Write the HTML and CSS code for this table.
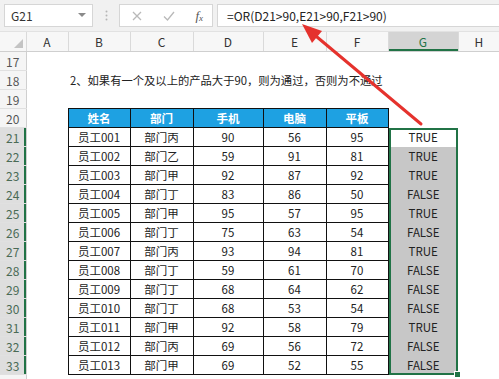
FILE: index.html
```html
<!DOCTYPE html>
<html>
<head>
<meta charset="utf-8">
<link rel="stylesheet" href="styles.css">
</head>
<body>
<div class="app">
  <div class="fbar">
    <div class="namebox">
      <span>G21</span>
      <svg class="dd" width="8" height="5" viewBox="0 0 8 5"><path d="M0 0 L8 0 L4 4 Z" fill="#8a8a8a"/></svg>
    </div>
    <div class="grip">
      <svg width="3" height="11" viewBox="0 0 3 11"><circle cx="1.5" cy="1.5" r="1" fill="#b5b5b5"/><circle cx="1.5" cy="5.5" r="1" fill="#b5b5b5"/><circle cx="1.5" cy="9.5" r="1" fill="#b5b5b5"/></svg>
    </div>
    <div class="btns">
      <svg width="10" height="10" viewBox="0 0 10 10"><path d="M1 1 L9 9 M9 1 L1 9" stroke="#b9b9b9" stroke-width="1.3" fill="none"/></svg>
      <svg width="12" height="10" viewBox="0 0 12 10"><path d="M1 5.5 L4.5 9 L11 1" stroke="#b9b9b9" stroke-width="1.3" fill="none"/></svg>
      <span class="fx">f<sub>x</sub></span>
    </div>
    <div class="formula">=OR(D21&gt;90,E21&gt;90,F21&gt;90)</div>
  </div>

  <table class="sheet">
    <colgroup>
      <col class="c-rh"><col class="c-a"><col class="c-b"><col class="c-c"><col class="c-d"><col class="c-e"><col class="c-f"><col class="c-g"><col class="c-h">
    </colgroup>
    <tr class="hdr">
      <td class="corner"><svg width="9" height="9" viewBox="0 0 9 9"><path d="M9 0 L9 9 L0 9 Z" fill="#c4c4c4"/></svg></td>
      <td class="ch">A</td><td class="ch">B</td><td class="ch">C</td><td class="ch">D</td><td class="ch">E</td><td class="ch">F</td><td class="ch chsel">G</td><td class="ch">H</td>
    </tr>
    <tr><td class="rh">17</td><td></td><td></td><td></td><td></td><td></td><td></td><td></td><td></td></tr>
    <tr><td class="rh">18</td><td></td><td class="note" colspan="7">2、如果有一个及以上的产品大于90，则为通过，否则为不通过</td></tr>
    <tr><td class="rh">19</td><td></td><td></td><td></td><td></td><td></td><td></td><td></td><td></td></tr>
    <tr><td class="rh">20</td><td></td><td class="th">姓名</td><td class="th">部门</td><td class="th">手机</td><td class="th">电脑</td><td class="th">平板</td><td></td><td></td></tr>
    <tr><td class="rh sel">21</td><td></td><td class="t">员工001</td><td class="t">部门丙</td><td class="t">90</td><td class="t">56</td><td class="t">95</td><td class="g active">TRUE</td><td></td></tr>
    <tr><td class="rh sel">22</td><td></td><td class="t">员工002</td><td class="t">部门乙</td><td class="t">59</td><td class="t">91</td><td class="t">81</td><td class="g">TRUE</td><td></td></tr>
    <tr><td class="rh sel">23</td><td></td><td class="t">员工003</td><td class="t">部门甲</td><td class="t">92</td><td class="t">87</td><td class="t">92</td><td class="g">TRUE</td><td></td></tr>
    <tr><td class="rh sel">24</td><td></td><td class="t">员工004</td><td class="t">部门丁</td><td class="t">83</td><td class="t">86</td><td class="t">50</td><td class="g">FALSE</td><td></td></tr>
    <tr><td class="rh sel">25</td><td></td><td class="t">员工005</td><td class="t">部门甲</td><td class="t">95</td><td class="t">57</td><td class="t">95</td><td class="g">TRUE</td><td></td></tr>
    <tr><td class="rh sel">26</td><td></td><td class="t">员工006</td><td class="t">部门丁</td><td class="t">75</td><td class="t">63</td><td class="t">54</td><td class="g">FALSE</td><td></td></tr>
    <tr><td class="rh sel">27</td><td></td><td class="t">员工007</td><td class="t">部门丙</td><td class="t">93</td><td class="t">94</td><td class="t">81</td><td class="g">TRUE</td><td></td></tr>
    <tr><td class="rh sel">28</td><td></td><td class="t">员工008</td><td class="t">部门丁</td><td class="t">59</td><td class="t">61</td><td class="t">70</td><td class="g">FALSE</td><td></td></tr>
    <tr><td class="rh sel">29</td><td></td><td class="t">员工009</td><td class="t">部门丁</td><td class="t">68</td><td class="t">64</td><td class="t">62</td><td class="g">FALSE</td><td></td></tr>
    <tr><td class="rh sel">30</td><td></td><td class="t">员工010</td><td class="t">部门丁</td><td class="t">68</td><td class="t">53</td><td class="t">54</td><td class="g">FALSE</td><td></td></tr>
    <tr><td class="rh sel">31</td><td></td><td class="t">员工011</td><td class="t">部门甲</td><td class="t">92</td><td class="t">58</td><td class="t">79</td><td class="g">TRUE</td><td></td></tr>
    <tr><td class="rh sel">32</td><td></td><td class="t">员工012</td><td class="t">部门丙</td><td class="t">69</td><td class="t">56</td><td class="t">72</td><td class="g">FALSE</td><td></td></tr>
    <tr><td class="rh sel">33</td><td></td><td class="t">员工013</td><td class="t">部门甲</td><td class="t">69</td><td class="t">52</td><td class="t">55</td><td class="g last">FALSE<span class="handle"></span></td><td></td></tr>
    <tr class="r34"><td class="rh"></td><td></td><td></td><td></td><td></td><td></td><td></td><td></td><td></td></tr>
  </table>

  <svg class="arrow" width="499" height="379" viewBox="0 0 499 379">
    <path d="M421 124 L317 37" stroke="#e5322d" stroke-width="3" stroke-linecap="round" fill="none"/>
    <polygon points="302,24 322,31 312,43" fill="#e5322d"/>
  </svg>
</div>
</body>
</html>
```

FILE: styles.css
```css
html, body {
  margin: 0;
  padding: 0;
  background: #ffffff;
}

.app {
  position: relative;
  width: 499px;
  height: 379px;
  overflow: hidden;
  font-family: "Noto Sans CJK SC", "Noto Sans", sans-serif;
  font-size: 12px;
  color: #222;
}

.fbar {
  display: flex;
  align-items: center;
  height: 31px;
  background: #f1f1f1;
  box-sizing: border-box;
  padding-left: 4px;
}

.namebox {
  display: flex;
  align-items: center;
  justify-content: space-between;
  box-sizing: border-box;
  width: 89px;
  height: 23px;
  background: #fff;
  border: 1px solid #d6d6d6;
  padding: 0 6px 0 6px;
  color: #333;
  font-size: 12px;
}

.grip {
  display: flex;
  align-items: center;
  width: 26px;
  justify-content: center;
}

.btns {
  display: flex;
  align-items: center;
  justify-content: space-between;
  box-sizing: border-box;
  width: 94px;
  height: 23px;
  background: #fff;
  border: 1px solid #d6d6d6;
  padding: 0 9px 0 12px;
}

.fx {
  font-family: "Liberation Serif", serif;
  font-style: italic;
  font-size: 13px;
  color: #555;
}

.fx sub {
  font-size: 9px;
  vertical-align: -1px;
}

.formula {
  flex: 1;
  box-sizing: border-box;
  height: 23px;
  margin-left: 4px;
  background: #fff;
  border: 1px solid #d6d6d6;
  border-right: none;
  padding-left: 9px;
  line-height: 21px;
  color: #222;
  font-size: 12px;
  white-space: nowrap;
}

.sheet {
  border-collapse: collapse;
  table-layout: fixed;
  width: 499px;
  font-size: 11.5px;
}

.c-rh { width: 26px; }
.c-a { width: 42px; }
.c-b { width: 62px; }
.c-c { width: 63px; }
.c-d { width: 70px; }
.c-e { width: 63px; }
.c-f { width: 62px; }
.c-g { width: 70px; }
.c-h { width: 41px; }

.sheet td {
  padding: 0;
  height: 18px;
  line-height: 17px;
  text-align: center;
  white-space: nowrap;
  overflow: visible;
}

.sheet .hdr td {
  height: 19px;
  background: #f7f7f7;
  border-bottom: 1px solid #cfcfcf;
  border-top: 1px solid #e2e2e2;
  color: #333;
  font-size: 12px;
}

.ch {
  border-left: 1px solid #dadada;
}

.sheet .corner {
  text-align: right;
  vertical-align: bottom;
}

.corner svg {
  display: block;
  margin: 0 3px 3px auto;
}

.sheet .hdr .chsel {
  background: #d4d4d4;
  color: #217346;
  box-shadow: inset 0 -2px 0 #217346;
}

.rh {
  background: #f5f5f5;
  color: #555;
  border-bottom: 1px solid #e0e0e0;
  border-right: 1px solid #cfcfcf;
  font-size: 12px;
}

.rh.sel {
  background: #dedede;
  color: #4a6a55;
  box-shadow: inset -2px 0 0 #217346;
}

.sheet .note {
  text-align: left;
  padding-left: 2px;
  font-size: 11.3px;
  color: #222;
}

.th {
  background: #1ea1e2;
  color: #fff;
  font-weight: bold;
  border: 1px solid #111;
}

.t {
  border: 1px solid #111;
  color: #222;
}

.g {
  position: relative;
  background: #c7c7c7;
  color: #222;
  box-shadow: inset 2px 0 0 #217346, inset -2px 0 0 #217346;
}

.g.active {
  background: #fff;
  box-shadow: inset 2px 0 0 #217346, inset -2px 0 0 #217346, inset 0 2px 0 #217346;
}

.g.last {
  box-shadow: inset 2px 0 0 #217346, inset -2px 0 0 #217346, inset 0 -2px 0 #217346;
}

.handle {
  position: absolute;
  right: -3px;
  bottom: -3px;
  width: 5px;
  height: 5px;
  background: #217346;
  border: 1px solid #fff;
}

.arrow {
  position: absolute;
  left: 0;
  top: 0;
  pointer-events: none;
}
```
